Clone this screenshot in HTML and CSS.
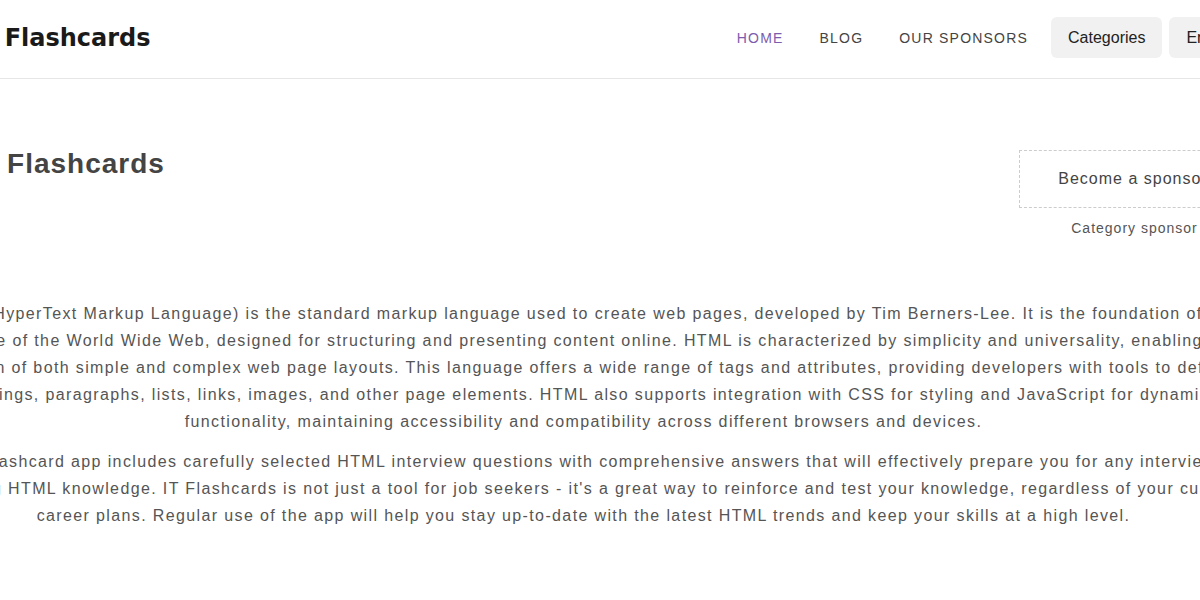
FILE: index.html
```html
<!DOCTYPE html>
<html lang="en">
<head>
    <meta charset="UTF-8">
    <meta name="viewport" content="width=device-width, initial-scale=1.0">
    <title>HTML Flashcards</title>
    <link rel="stylesheet" href="styles.css">
</head>
<body>

    <!-- Top navigation bar -->
    <header class="site-header">
        <div class="container header-inner">
            <a class="logo" href="#">
                <svg class="logo-icon" viewBox="0 0 48 48" width="48" height="48">
                    <rect x="6" y="10" width="30" height="30" rx="5" fill="#7c5cad"/>
                    <rect x="12" y="6" width="30" height="30" rx="5" fill="#222"/>
                </svg>
                <span>IT Flashcards</span>
            </a>
            <nav class="nav">
                <a class="nav-link active" href="#">HOME</a>
                <a class="nav-link" href="#">BLOG</a>
                <a class="nav-link" href="#">OUR SPONSORS</a>
                <button class="nav-button">Categories</button>
                <button class="nav-button lang">
                    En
                    <svg viewBox="0 0 12 12" width="12" height="12">
                        <path d="M2 4l4 4 4-4" fill="none" stroke="#222" stroke-width="1.5"/>
                    </svg>
                </button>
            </nav>
        </div>
    </header>

    <main class="container">
        <!-- Title and sponsor slot -->
        <div class="intro">
            <h1 class="title">HTML Flashcards</h1>
            <aside class="sponsor">
                <a class="sponsor-box" href="#">Become a sponsor</a>
                <p class="sponsor-label">Category sponsor</p>
            </aside>
        </div>

        <!-- Category description -->
        <div class="description">
            <p>HTML (HyperText Markup Language) is the standard markup language used to create web pages, developed by Tim Berners-Lee. It is the foundation of the structure of the World Wide Web, designed for structuring and presenting content online. HTML is characterized by simplicity and universality, enabling the creation of both simple and complex web page layouts. This language offers a wide range of tags and attributes, providing developers with tools to define headings, paragraphs, lists, links, images, and other page elements. HTML also supports integration with CSS for styling and JavaScript for dynamic functionality, maintaining accessibility and compatibility across different browsers and devices.</p>
            <p>Our flashcard app includes carefully selected HTML interview questions with comprehensive answers that will effectively prepare you for any interview requiring HTML knowledge. IT Flashcards is not just a tool for job seekers - it's a great way to reinforce and test your knowledge, regardless of your current career plans. Regular use of the app will help you stay up-to-date with the latest HTML trends and keep your skills at a high level.</p>
        </div>
    </main>

</body>
</html>
```

FILE: styles.css
```css
/* Page basics */
body {
    margin: 0;
    overflow: hidden;
    background-color: #fff;
    font-family: "Liberation Sans", Arial, sans-serif;
    color: #555;
}

/* Wide centered container (wider than the window) */
.container {
    width: 1333px;
    margin-left: -83px;
}

/* Header */
.site-header {
    border-bottom: 1px solid #e6e6e6;
}

.header-inner {
    height: 75px;
    padding-bottom: 3px;
    display: flex;
    align-items: center;
    justify-content: space-between;
}

.logo {
    display: flex;
    align-items: center;
    gap: 6px;
    text-decoration: none;
    color: #1a1a1a;
    font-family: "DejaVu Sans", Verdana, sans-serif;
    font-weight: 700;
    font-size: 24px;
}

.nav {
    display: flex;
    align-items: center;
}

.nav-link {
    padding: 0 18px;
    font-size: 14px;
    letter-spacing: 1.2px;
    color: #444;
    text-decoration: none;
}

.nav-link.active {
    color: #7c5cad;
}

.nav-button {
    margin-left: 7px;
    height: 41px;
    padding: 0 17px;
    border: none;
    border-radius: 6px;
    background-color: #f1f1f1;
    color: #222;
    font-family: "Liberation Sans", Arial, sans-serif;
    font-size: 16px;
}

.nav-button:first-of-type {
    margin-left: 5px;
}

.nav-button.lang {
    display: flex;
    align-items: center;
    gap: 10px;
    padding: 0 22px 0 17px;
}

/* Title row */
.intro {
    display: flex;
    justify-content: space-between;
    align-items: flex-start;
    padding-top: 69px;
}

.title {
    margin: 0;
    font-size: 28px;
    letter-spacing: 1px;
    color: #444;
}

.sponsor {
    width: 231px;
    margin-top: 2px;
    text-align: center;
}

.sponsor-box {
    display: flex;
    align-items: center;
    justify-content: center;
    height: 56px;
    padding-right: 3px;
    border: 1px dashed #ccc;
    color: #444;
    font-size: 16px;
    letter-spacing: 1px;
    text-decoration: none;
}

.sponsor-label {
    margin: 12px 0 0;
    font-size: 14px;
    letter-spacing: 1px;
    color: #555;
}

/* Description text */
.description {
    margin-top: 64px;
    text-align: center;
}

.description p {
    margin: 0 0 13px;
    font-size: 16px;
    line-height: 27px;
    letter-spacing: 1.37px;
}
```
